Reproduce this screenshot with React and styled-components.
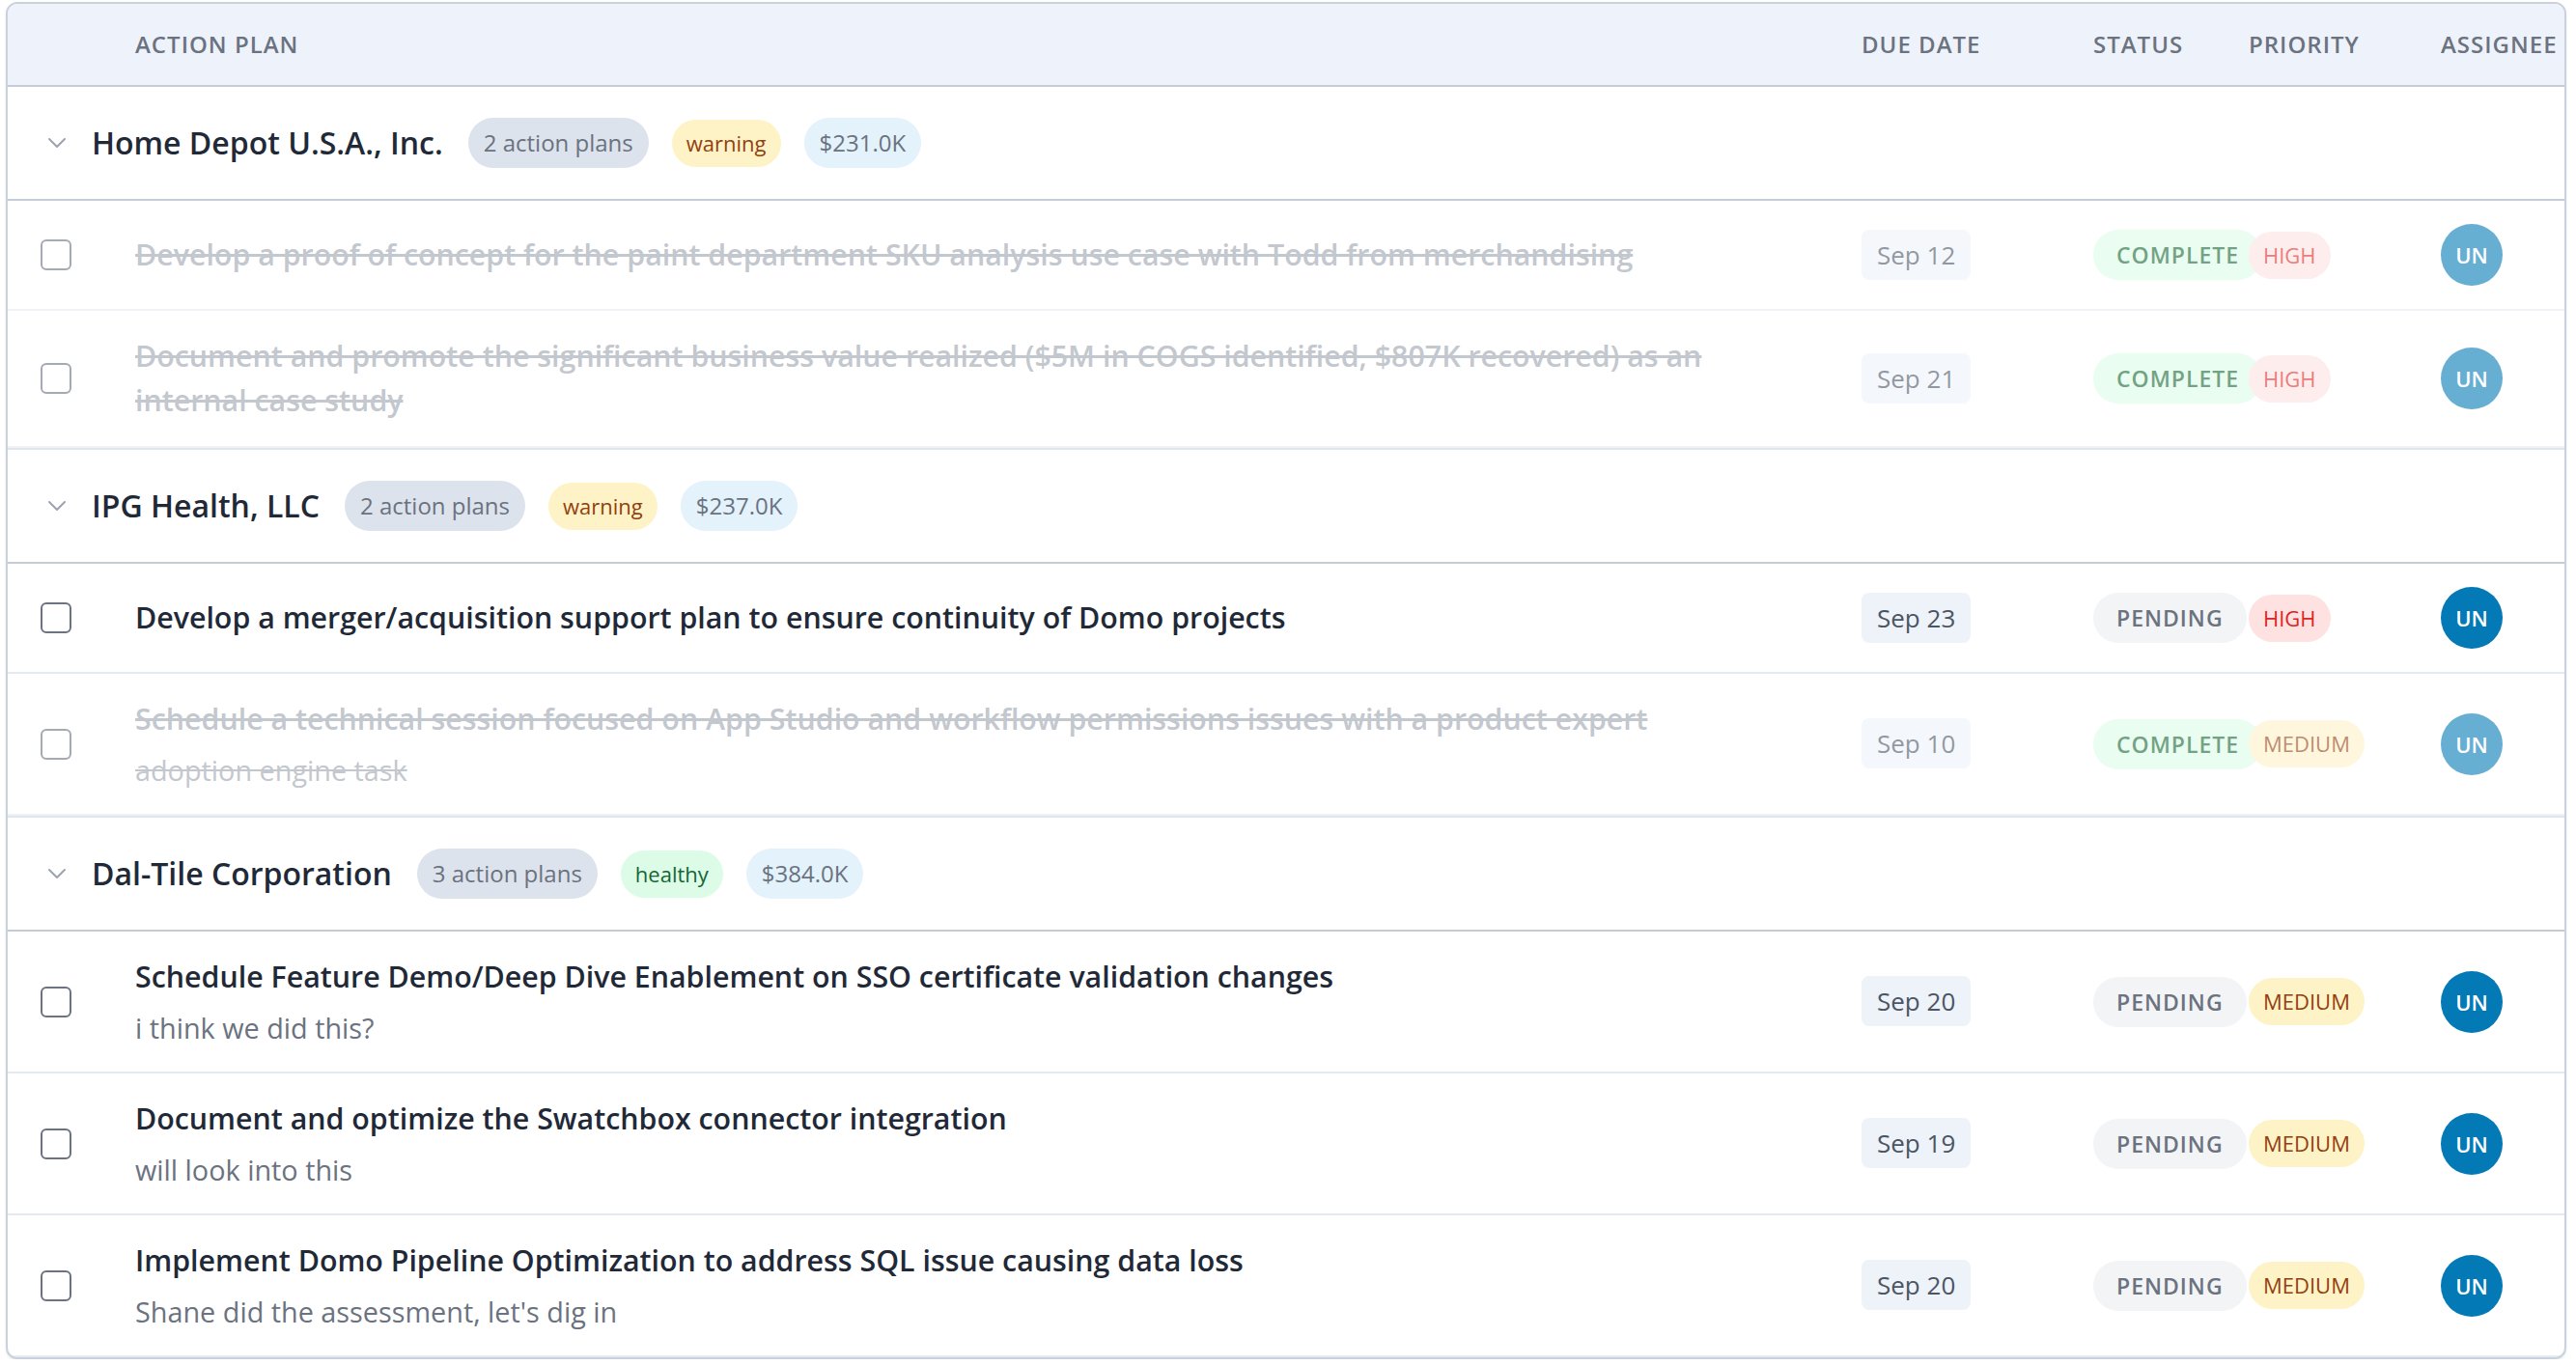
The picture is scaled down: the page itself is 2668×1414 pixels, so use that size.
import React from "react";
import styled, { createGlobalStyle, css } from "styled-components";

const GlobalStyle = createGlobalStyle`
  html, body { margin: 0; padding: 0; background: #ffffff; }
  body { font-family: "Open Sans", "Noto Sans", sans-serif; color: #1f2937; overflow: hidden; }
  * { box-sizing: border-box; }
`;

const Page = styled.div`
  padding: 2px 10px 0 6px;
`;

const Card = styled.div`
  border: 2px solid #c9d1dc;
  border-radius: 12px;
  background: #ffffff;
  overflow: hidden;
  box-shadow: 0 2px 3px rgba(15, 23, 42, 0.08);
`;

const COLS = "132px 1fr 240px 161px 199px 128px";

const HeaderRow = styled.div`
  display: grid;
  grid-template-columns: ${COLS};
  align-items: center;
  background: #eef3fb;
  border-bottom: 2px solid #c3ccd7;
  padding: 24px 0;
`;

const HeadCell = styled.div`
  font-size: 24px;
  line-height: 36px;
  font-weight: 600;
  letter-spacing: 1px;
  color: #6b7280;
  text-transform: uppercase;
  white-space: nowrap;
`;

const Section = styled.div`
  & + & { border-top: 2px solid #dfe5ec; }
`;

const GroupRow = styled.div`
  display: flex;
  align-items: center;
  gap: 24px;
  padding: 32px 0 32px 41px;
  border-bottom: 2px solid #c3ccd7;
`;

const Chevron = styled.svg`
  width: 20px;
  height: 12px;
  margin-right: 2px;
  flex: none;
`;

const GroupName = styled.div`
  font-size: 32px;
  line-height: 48px;
  font-weight: 600;
  color: #1f2937;
  margin-right: 2px;
`;

const pillTones = {
  count: css`background: #dde3ec; color: #6b7280; font-size: 24px; line-height: 36px; padding: 8px 16px;`,
  warning: css`background: #fef3c7; color: #92400e; font-size: 22px; line-height: 33px; padding: 8px 15px;`,
  healthy: css`background: #dcfce7; color: #166534; font-size: 22px; line-height: 33px; padding: 8px 15px;`,
  amount: css`background: #e3f2fb; color: #6b7280; font-size: 24px; line-height: 36px; padding: 8px 16px;`,
};

const GroupPill = styled.span`
  border-radius: 999px;
  white-space: nowrap;
  font-weight: 400;
  ${(p) => pillTones[p.$tone]}
`;

const TaskRow = styled.div`
  display: grid;
  grid-template-columns: ${COLS};
  align-items: center;
  padding: 24px 0;
  border-bottom: 2px solid #e5e9f0;
  opacity: ${(p) => (p.$done ? 0.6 : 1)};
`;

const CheckCell = styled.div`
  padding-left: 34px;
  display: flex;
  align-items: center;
`;

const Checkbox = styled.span`
  display: block;
  width: 32px;
  height: 32px;
  border: 2.5px solid #6b7280;
  border-radius: 6px;
  background: #fff;
`;

const TitleCell = styled.div`
  padding-right: 80px;
  display: flex;
  flex-direction: column;
`;

const TaskTitle = styled.div`
  font-size: 30.35px;
  line-height: 46px;
  font-weight: 600;
  color: ${(p) => (p.$done ? "#9ca3af" : "#1f2937")};
  text-decoration: ${(p) => (p.$done ? "line-through" : "none")};
`;

const TaskDesc = styled.div`
  margin-top: 9px;
  font-size: 28.8px;
  line-height: 42px;
  font-weight: 400;
  color: ${(p) => (p.$done ? "#9ca3af" : "#6b7280")};
  text-decoration: ${(p) => (p.$done ? "line-through" : "none")};
`;

const DateBadge = styled.span`
  justify-self: start;
  background: #eef2f9;
  color: #4b5563;
  font-size: 26px;
  line-height: 39px;
  padding: 8px 16px;
  border-radius: 8px;
  white-space: nowrap;
`;

const PillCell = styled.div`
  display: flex;
  align-items: center;
  min-width: 0;
`;

const StatusPill = styled.span`
  flex: none;
  border-radius: 999px;
  font-size: 23px;
  line-height: 36px;
  padding: 8px 24px;
  font-weight: 600;
  letter-spacing: 1px;
  white-space: nowrap;
  background: ${(p) => (p.$status === "COMPLETE" ? "#dcfce7" : "#f3f4f6")};
  color: ${(p) => (p.$status === "COMPLETE" ? "#166534" : "#6b7280")};
`;

const PriorityPill = styled.span`
  flex: none;
  border-radius: 999px;
  font-size: 22px;
  line-height: 33px;
  padding: 8px 15px;
  font-weight: 400;
  white-space: nowrap;
  background: ${(p) => (p.$level === "HIGH" ? "#fee2e2" : "#fef3c7")};
  color: ${(p) => (p.$level === "HIGH" ? "#dc2626" : "#92400e")};
`;

const Avatar = styled.span`
  display: flex;
  align-items: center;
  justify-content: center;
  width: 64px;
  height: 64px;
  border-radius: 50%;
  background: #0379b6;
  color: #ffffff;
  font-size: 22px;
  font-weight: 600;
`;

const groups = [
  {
    name: "Home Depot U.S.A., Inc.",
    count: "2 action plans",
    health: "warning",
    amount: "$231.0K",
    tasks: [
      { title: "Develop a proof of concept for the paint department SKU analysis use case with Todd from merchandising", date: "Sep 12", status: "COMPLETE", priority: "HIGH" },
      { title: "Document and promote the significant business value realized ($5M in COGS identified, $807K recovered) as an internal case study", date: "Sep 21", status: "COMPLETE", priority: "HIGH" },
    ],
  },
  {
    name: "IPG Health, LLC",
    count: "2 action plans",
    health: "warning",
    amount: "$237.0K",
    tasks: [
      { title: "Develop a merger/acquisition support plan to ensure continuity of Domo projects", date: "Sep 23", status: "PENDING", priority: "HIGH" },
      { title: "Schedule a technical session focused on App Studio and workflow permissions issues with a product expert", desc: "adoption engine task", date: "Sep 10", status: "COMPLETE", priority: "MEDIUM" },
    ],
  },
  {
    name: "Dal-Tile Corporation",
    count: "3 action plans",
    health: "healthy",
    amount: "$384.0K",
    tasks: [
      { title: "Schedule Feature Demo/Deep Dive Enablement on SSO certificate validation changes", desc: "i think we did this?", date: "Sep 20", status: "PENDING", priority: "MEDIUM" },
      { title: "Document and optimize the Swatchbox connector integration", desc: "will look into this", date: "Sep 19", status: "PENDING", priority: "MEDIUM" },
      { title: "Implement Domo Pipeline Optimization to address SQL issue causing data loss", desc: "Shane did the assessment, let's dig in", date: "Sep 20", status: "PENDING", priority: "MEDIUM" },
    ],
  },
];

function Task({ t }) {
  const done = t.status === "COMPLETE";
  return (
    <TaskRow $done={done}>
      <CheckCell>
        <Checkbox />
      </CheckCell>
      <TitleCell>
        <TaskTitle $done={done}>{t.title}</TaskTitle>
        {t.desc && <TaskDesc $done={done}>{t.desc}</TaskDesc>}
      </TitleCell>
      <div>
        <DateBadge>{t.date}</DateBadge>
      </div>
      <PillCell>
        <StatusPill $status={t.status}>{t.status}</StatusPill>
      </PillCell>
      <PillCell>
        <PriorityPill $level={t.priority}>{t.priority}</PriorityPill>
      </PillCell>
      <div>
        <Avatar>UN</Avatar>
      </div>
    </TaskRow>
  );
}

export default function App() {
  return (
    <>
      <GlobalStyle />
      <Page>
        <Card>
          <HeaderRow>
            <div />
            <HeadCell>Action Plan</HeadCell>
            <HeadCell>Due Date</HeadCell>
            <HeadCell>Status</HeadCell>
            <HeadCell>Priority</HeadCell>
            <HeadCell>Assignee</HeadCell>
          </HeaderRow>
          {groups.map((g) => (
            <Section key={g.name}>
              <GroupRow>
                <Chevron viewBox="0 0 20 12" fill="none">
                  <path d="M2 2 L10 10 L18 2" stroke="#9ca3af" strokeWidth="2" strokeLinecap="round" strokeLinejoin="round" />
                </Chevron>
                <GroupName>{g.name}</GroupName>
                <GroupPill $tone="count">{g.count}</GroupPill>
                <GroupPill $tone={g.health}>{g.health}</GroupPill>
                <GroupPill $tone="amount">{g.amount}</GroupPill>
              </GroupRow>
              {g.tasks.map((t, i) => (
                <Task key={i} t={t} />
              ))}
            </Section>
          ))}
        </Card>
      </Page>
    </>
  );
}
